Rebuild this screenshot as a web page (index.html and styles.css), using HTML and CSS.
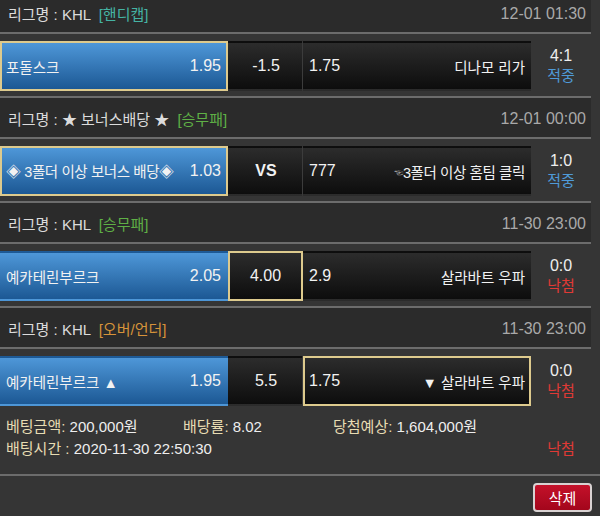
FILE: index.html
```html
<!DOCTYPE html>
<html lang="ko">
<head>
<meta charset="utf-8">
<link rel="stylesheet" href="styles.css">
</head>
<body>
<div class="page">
  <div class="list">
    <section class="bet">
      <div class="bet-head">
        <div class="league">리그명 : KHL <span class="type handi">[핸디캡]</span></div>
        <div class="date">12-01 01:30</div>
      </div>
      <div class="bet-row">
        <div class="cell home picked"><span>포돌스크</span><span class="num">1.95</span></div>
        <div class="cell mid num">-1.5</div>
        <div class="cell away"><span class="num">1.75</span><span>디나모 리가</span></div>
        <div class="score"><span class="num">4:1</span><span class="hit">적중</span></div>
      </div>
    </section>
    <section class="bet">
      <div class="bet-head">
        <div class="league">리그명 : ★ 보너스배당 ★ <span class="type wdl">[승무패]</span></div>
        <div class="date">12-01 00:00</div>
      </div>
      <div class="bet-row">
        <div class="cell home picked"><span class="tight">◈ 3폴더 이상 보너스 배당◈</span><span class="num">1.03</span></div>
        <div class="cell mid vs">VS</div>
        <div class="cell away"><span class="num">777</span><span class="tight"><span class="hand">☜</span>3폴더 이상 홈팀 클릭</span></div>
        <div class="score"><span class="num">1:0</span><span class="hit">적중</span></div>
      </div>
    </section>
    <section class="bet">
      <div class="bet-head">
        <div class="league">리그명 : KHL <span class="type wdl">[승무패]</span></div>
        <div class="date">11-30 23:00</div>
      </div>
      <div class="bet-row">
        <div class="cell home"><span>예카테린부르크</span><span class="num">2.05</span></div>
        <div class="cell mid picked num">4.00</div>
        <div class="cell away"><span class="num">2.9</span><span>살라바트 우파</span></div>
        <div class="score"><span class="num">0:0</span><span class="miss">낙첨</span></div>
      </div>
    </section>
    <section class="bet last">
      <div class="bet-head">
        <div class="league">리그명 : KHL <span class="type ou">[오버/언더]</span></div>
        <div class="date">11-30 23:00</div>
      </div>
      <div class="bet-row">
        <div class="cell home"><span>예카테린부르크 ▲</span><span class="num">1.95</span></div>
        <div class="cell mid num">5.5</div>
        <div class="cell away picked"><span class="num">1.75</span><span>▼ 살라바트 우파</span></div>
        <div class="score"><span class="num">0:0</span><span class="miss">낙첨</span></div>
      </div>
    </section>
  </div>
  <div class="details">
    <div class="info-line first-line">
      <div><span class="label">베팅금액:</span> 200,000원</div>
      <div><span class="label">배당률:</span> 8.02</div>
      <div><span class="label">당첨예상:</span> 1,604,000원</div>
    </div>
    <div class="info-line second-line">
      <div><span class="label">배팅시간 :</span> 2020-11-30 22:50:30</div>
      <div class="miss result">낙첨</div>
    </div>
  </div>
  <div class="footer">
    <button class="del" type="button">삭제</button>
  </div>
</div>
</body>
</html>
```

FILE: styles.css
```css
* { box-sizing: border-box; }

html, body {
  margin: 0;
  padding: 0;
  background: #353535;
}

body {
  font-family: "Liberation Sans", "Noto Sans CJK KR", sans-serif;
  font-size: 14.5px;
  color: #eeeeee;
  width: 600px;
  height: 516px;
  overflow: hidden;
}

.list {
  width: 591px;
  margin-top: -7px;
}

.bet {
  border-bottom: 2px solid #6c6c6c;
}

.bet.last {
  border-bottom: none;
}

.bet-head {
  height: 41px;
  display: flex;
  align-items: center;
  justify-content: space-between;
  padding: 2px 5px 0 8px;
  background: #2b2b2b;
  border-bottom: 2px solid #6c6c6c;
  color: #dcdcdc;
  font-size: 15px;
}

.type { margin-left: 4px; }
.handi { color: #45b3a4; }
.wdl { color: #5fb046; }
.ou { color: #d6933a; }

.date { color: #a9a9a9; font-size: 16px; }

.bet-row {
  display: grid;
  grid-template-columns: 228px 75px 228px 60px;
  padding: 7px 0 5px;
}

.cell {
  height: 50px;
  display: flex;
  align-items: center;
  justify-content: space-between;
  border: 2px solid transparent;
  background: linear-gradient(#2c2c2c, #0d0d0d);
  color: #f2f2f2;
  white-space: nowrap;
}

.num { font-size: 16px; }

.home {
  padding: 0 5px 0 4px;
  background: linear-gradient(#4e97d8, #1c5894);
}

.mid {
  justify-content: center;
  border-right: 1px solid #3c3c3c;
}

.vs { font-weight: bold; font-size: 16px; }

.away {
  padding: 0 4px 0 4px;
}

.picked {
  border: 2px solid #ddca8d;
}

.mid.picked { border-right-width: 2px; }

.tight { letter-spacing: -0.4px; }

.hand {
  font-size: 9px;
  color: #9a9a9a;
  vertical-align: 2px;
}

.score {
  display: flex;
  flex-direction: column;
  align-items: center;
  justify-content: center;
  line-height: 20px;
  color: #eeeeee;
  font-size: 15px;
}

.hit { color: #4f9ad8; }
.miss { color: #e03a35; }

.details {
  padding: 5px 0 14px 6px;
  border-bottom: 2px solid #6c6c6c;
  line-height: 22px;
  font-size: 15px;
  color: #eeeeee;
}

.label { color: #e7dcb3; }

.info-line { display: grid; }

.first-line { grid-template-columns: 177px 150px 1fr; }

.second-line { grid-template-columns: 1fr 60px; padding-right: 9px; }

.result { text-align: center; }

.footer {
  display: flex;
  justify-content: flex-end;
  padding: 7px 8px 0 0;
}

.del {
  width: 59px;
  height: 29px;
  border: 2px solid #d9d2d2;
  border-radius: 4px;
  background: linear-gradient(#c4112a, #a3061c);
  color: #ffffff;
  font-family: "Liberation Sans", "Noto Sans CJK KR", sans-serif;
  font-size: 15px;
  padding: 0;
}
```
